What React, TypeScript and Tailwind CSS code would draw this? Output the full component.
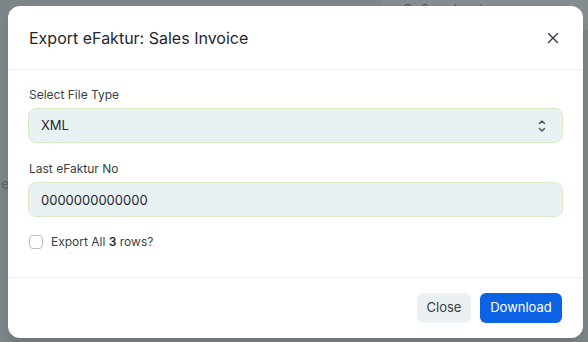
import React, { useState } from "react";

const ChevronsIcon: React.FC = () => (
    <svg width="12" height="16" viewBox="0 0 12 16" fill="none" stroke="#4b5563" strokeWidth="1.5" strokeLinecap="round" strokeLinejoin="round">
        <path d="M3.5 5.5 L6 3 L8.5 5.5" />
        <path d="M3.5 10.5 L6 13 L8.5 10.5" />
    </svg>
);

const CloseIcon: React.FC = () => (
    <svg width="16" height="16" viewBox="0 0 16 16" fill="none" stroke="#374151" strokeWidth="1.5" strokeLinecap="round">
        <path d="M3.5 3.5 L12.5 12.5" />
        <path d="M12.5 3.5 L3.5 12.5" />
    </svg>
);

const App: React.FC = () => {
    const [fileType, setFileType] = useState("XML");
    const [lastNo, setLastNo] = useState("0000000000000");
    const [exportAll, setExportAll] = useState(false);

    return (
        <div
            className="relative h-[342px] w-[588px] overflow-hidden bg-[#7d8588]"
            style={{ fontFamily: "Inter, 'Noto Sans', sans-serif" }}
        >
            {/* page behind the overlay */}
            <div className="flex h-[30px] justify-end">
                <div className="flex h-[30px] w-[206px] items-start gap-2 bg-[#858c8f] px-5 pt-[1px] text-[12px] leading-4 text-[#4a5053]">
                    <span>○</span>
                    <span>Search or type</span>
                </div>
            </div>
            <div className="flex flex-col">
                <div className="h-[28px] border-b border-[#798a7a]" />
                <div className="h-[28px] border-b border-[#7a837f]" />
                <div className="h-[28px] border-b border-[#798a7a]" />
                <div className="h-[28px] border-b border-[#7a837f]" />
                <div className="h-[28px] border-b border-[#798a7a]" />
                <div className="flex h-[28px] items-center border-b border-[#7a837f] pl-[1px] text-[14px] text-[#5e6467]">
                    e
                </div>
                <div className="h-[28px] border-b border-[#798a7a]" />
                <div className="h-[28px] border-b border-[#7a837f]" />
                <div className="h-[28px] border-b border-[#798a7a]" />
            </div>

            {/* dialog */}
            <div className="absolute left-[8px] top-[6px] flex w-[575px] flex-col rounded-xl bg-white shadow-lg">
                <div className="flex h-[64px] items-center justify-between border-b border-[#eef0f2] pl-[21px] pr-[22px]">
                    <h2 className="text-[16px] text-[#1f272e]">Export eFaktur: Sales Invoice</h2>
                    <button className="flex items-center justify-center">
                        <CloseIcon />
                    </button>
                </div>

                <div className="flex flex-col px-5 pb-[25px] pt-[15px]">
                    <label className="mb-[3px] block pl-[1px] text-[12px] leading-5 text-[#383f44]">Select File Type</label>
                    <div className="flex h-[35px] items-center justify-between rounded-lg border border-[#dde8c6] bg-[#e9f2f3] pl-3 pr-[14px] text-[13px] text-[#1f272e]">
                        <span>{fileType}</span>
                        <button onClick={() => setFileType(fileType === "XML" ? "CSV" : "XML")}>
                            <ChevronsIcon />
                        </button>
                    </div>

                    <label className="mb-[3px] mt-4 block pl-[1px] text-[12px] leading-5 text-[#383f44]">Last eFaktur No</label>
                    <input
                        value={lastNo}
                        onChange={(e) => setLastNo(e.target.value)}
                        className="h-[35px] rounded-lg border border-[#dde8c6] bg-[#e9f2f3] px-3 text-[13px] text-[#1f272e] outline-none"
                    />

                    <label className="mt-[15px] flex h-5 items-center gap-[8px] pl-[1px] text-[12px] text-[#383f44]">
                        <input
                            type="checkbox"
                            checked={exportAll}
                            onChange={(e) => setExportAll(e.target.checked)}
                            className="h-[14px] w-[14px] appearance-none rounded-[4px] border border-[#b9c0c6] bg-white"
                        />
                        <span>
                            Export All <b className="font-semibold text-[#1f272e]">3</b> rows?
                        </span>
                    </label>
                </div>

                <div className="flex items-center justify-end gap-[9px] border-t border-[#eef0f2] pb-[15px] pr-[21px] pt-[15px]">
                    <button className="h-[30px] w-[54px] rounded-md bg-[#ebf1f3] text-[13px] text-[#383f44]">Close</button>
                    <button className="h-[30px] w-[82px] rounded-md bg-[#0d63e6] text-[13px] text-white">Download</button>
                </div>
            </div>
        </div>
    );
};

export default App;
